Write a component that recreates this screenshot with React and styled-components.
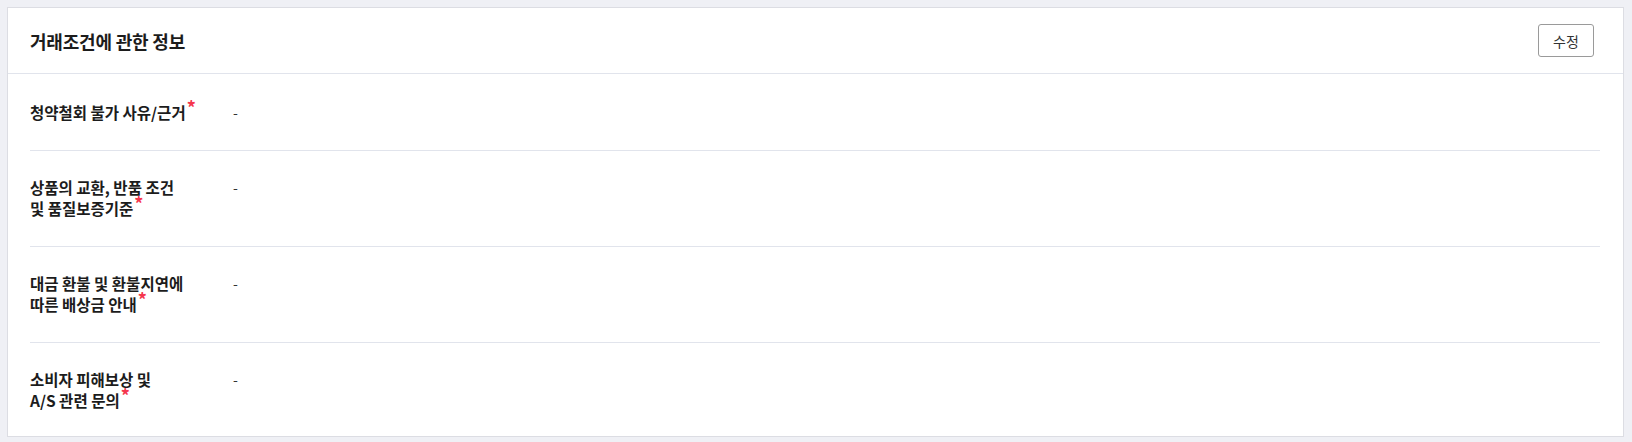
import React from 'react'
import styled, { createGlobalStyle } from 'styled-components'

const GlobalStyle = createGlobalStyle`
  html, body {
    margin: 0;
    padding: 0;
    background: #eff0f5;
    font-family: "Noto Sans CJK KR", "Noto Sans", sans-serif;
    color: #222;
  }
`

const Page = styled.div`
  padding: 7px 8px 4px 7px;
`

const Card = styled.section`
  background: #fff;
  border: 1px solid #dcdde3;
`

const CardHeader = styled.header`
  height: 65px;
  display: flex;
  align-items: center;
  justify-content: space-between;
  padding: 0 29px 0 22px;
  border-bottom: 1px solid #e1e4ec;
`

const Title = styled.h2`
  margin: 0;
  font-size: 18px;
  font-weight: 700;
  color: #1c1c1c;
  letter-spacing: -0.2px;
`

const EditButton = styled.button`
  width: 56px;
  height: 33px;
  border: 1px solid #9a9a9a;
  border-radius: 3px;
  background: #fff;
  font-family: inherit;
  font-size: 14px;
  color: #333;
  cursor: pointer;
`

const List = styled.div`
  padding: 0 23px 0 22px;
`

const Row = styled.div`
  display: flex;
  padding: 26px 0 27px;
  line-height: 21px;
  border-top: 1px solid #e1e4ec;

  &:first-child {
    padding-top: 28px;
    border-top: none;
  }

  &:last-child {
    padding-bottom: 25px;
  }
`

const Label = styled.div`
  width: 203px;
  flex-shrink: 0;
  font-size: 15.5px;
  font-weight: 700;
  color: #1c1c1c;
`

const Required = styled.span`
  display: inline-block;
  color: #f5364d;
  font-size: 18px;
  font-weight: 700;
  line-height: 1;
  vertical-align: top;
  margin-top: -4px;
  margin-left: 1px;
`

const Value = styled.div`
  font-size: 14px;
  color: #333;
`

const rows = [
  ['청약철회 불가 사유/근거'],
  ['상품의 교환, 반품 조건', '및 품질보증기준'],
  ['대금 환불 및 환불지연에', '따른 배상금 안내'],
  ['소비자 피해보상 및', 'A/S 관련 문의'],
]

export default function App() {
  return (
    <>
      <GlobalStyle />
      <Page>
        <Card>
          <CardHeader>
            <Title>거래조건에 관한 정보</Title>
            <EditButton>수정</EditButton>
          </CardHeader>
          <List>
            {rows.map((lines, i) => (
              <Row key={i}>
                <Label>
                  {lines.map((line, j) => (
                    <React.Fragment key={j}>
                      {j > 0 && <br />}
                      {line}
                    </React.Fragment>
                  ))}
                  <Required>*</Required>
                </Label>
                <Value>-</Value>
              </Row>
            ))}
          </List>
        </Card>
      </Page>
    </>
  )
}
